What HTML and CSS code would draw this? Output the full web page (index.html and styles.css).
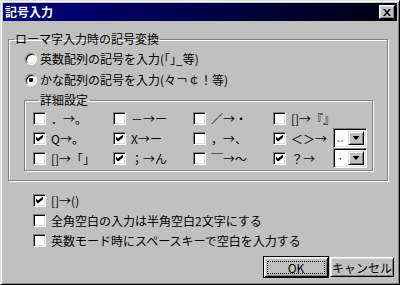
FILE: index.html
```html
<!DOCTYPE html>
<html lang="ja">

<head>
    <meta charset="UTF-8">
    <title>記号入力</title>
    <link rel="stylesheet" href="styles.css">
</head>

<body>

    <div class="window">
        <div class="titlebar">
            <span class="title">記号入力</span>
            <button class="close" type="button">
                <svg width="8" height="7" viewBox="0 0 8 7">
                    <path d="M0 0H2L4 2.2L6 0H8L5 3.5L8 7H6L4 4.8L2 7H0L3 3.5Z" fill="#000" />
                </svg>
            </button>
        </div>

        <div class="content">
            <fieldset class="group outer">
                <legend>ローマ字入力時の記号変換</legend>
                <label class="radio-row"><span class="radio"></span>英数配列の記号を入力(｢｣_等)</label>
                <label class="radio-row"><span class="radio on"></span>かな配列の記号を入力(々￢￠！等)</label>

                <fieldset class="group detail">
                    <legend>詳細設定</legend>
                    <div class="grid">
                        <div class="cell"><span class="check"></span>．→。</div>
                        <div class="cell"><span class="check"></span>－→ー</div>
                        <div class="cell"><span class="check"></span>／→・</div>
                        <div class="cell"><span class="check"></span>[]→『』</div>

                        <div class="cell"><span class="check on"></span>Q→。</div>
                        <div class="cell"><span class="check on"></span>X→ー</div>
                        <div class="cell"><span class="check"></span>，→、</div>
                        <div class="cell">
                            <span class="check on"></span>＜＞→
                            <span class="combo"><span class="combo-value">、。</span><span class="combo-btn"></span></span>
                        </div>

                        <div class="cell"><span class="check"></span>[]→「」</div>
                        <div class="cell"><span class="check on"></span>；→ん</div>
                        <div class="cell"><span class="check"></span>￣→～</div>
                        <div class="cell">
                            <span class="check on"></span>？→
                            <span class="combo"><span class="combo-value">・</span><span class="combo-btn"></span></span>
                        </div>
                    </div>
                </fieldset>
            </fieldset>

            <div class="options">
                <label class="opt"><span class="check on"></span>[]→()</label>
                <label class="opt"><span class="check"></span>全角空白の入力は半角空白2文字にする</label>
                <label class="opt"><span class="check"></span>英数モード時にスペースキーで空白を入力する</label>
            </div>

            <div class="buttons">
                <button class="btn default" type="button"><span class="focus">OK</span></button>
                <button class="btn" type="button">キャンセル</button>
            </div>
        </div>
    </div>

</body>

</html>
```

FILE: styles.css
```css
* {
    box-sizing: border-box;
}

body {
    margin: 0;
    background-color: #c0c0c0;
    font-family: "Noto Sans CJK JP", "Liberation Sans", sans-serif;
    font-size: 12px;
    color: #000;
}

.window {
    width: 400px;
    height: 285px;
    padding: 2px;
    border: 1px solid;
    border-color: #dfdfdf #000 #000 #dfdfdf;
    box-shadow: inset 1px 1px #fff, inset -1px -1px #808080;
}

.titlebar {
    height: 18px;
    display: flex;
    align-items: center;
    justify-content: space-between;
    padding: 0 2px;
    background: linear-gradient(to right, #000080, #000010);
    color: #fff;
}

.title {
    font-weight: bold;
    line-height: 18px;
}

.close {
    width: 16px;
    height: 14px;
    padding: 0;
    display: flex;
    align-items: center;
    justify-content: center;
    background-color: #c0c0c0;
    border: 1px solid;
    border-color: #fff #000 #000 #fff;
    box-shadow: inset 1px 1px #dfdfdf, inset -1px -1px #808080;
}

/* etched group frame */
.group {
    margin: 0;
    border: 1px solid #808080;
    box-shadow: inset 1px 1px #fff, 1px 1px #fff;
    min-width: 0;
}

.group legend {
    margin-left: 5px;
    padding: 0 1px;
    line-height: 14px;
    height: 14px;
}

.outer {
    width: 380px;
    margin: 11px 0 0 5px;
    padding: 2px 0 9px 0;
}

.radio-row {
    display: flex;
    align-items: center;
    gap: 3px;
    height: 21px;
    padding-left: 16px;
}

.radio {
    width: 12px;
    height: 12px;
    border-radius: 50%;
    background-color: #fff;
    border: 1px solid;
    border-color: #808080 #fff #fff #808080;
    box-shadow: inset 1px 1px #000, inset -1px -1px #dfdfdf;
    display: flex;
    align-items: center;
    justify-content: center;
}

.radio.on::after {
    content: "";
    width: 4px;
    height: 4px;
    border-radius: 1px;
    background-color: #000;
}

.detail {
    width: 349px;
    margin: 3px 0 0 15px;
    padding: 1px 5px 2px 8px;
}

.detail legend {
    padding: 0 2px;
}

.grid {
    display: grid;
    grid-template-columns: 80px 80px 80px auto;
    grid-auto-rows: 20px;
}

.cell {
    display: flex;
    align-items: center;
    gap: 5px;
    white-space: nowrap;
}

.check {
    flex: none;
    width: 13px;
    height: 13px;
    background-color: #fff;
    border: 1px solid;
    border-color: #808080 #fff #fff #808080;
    box-shadow: inset 1px 1px #000, inset -1px -1px #dfdfdf;
    display: flex;
    align-items: center;
    justify-content: center;
}

.check.on::after {
    content: "";
    width: 7px;
    height: 7px;
    background-color: #000;
    clip-path: polygon(0 28%, 28% 57%, 100% 0, 100% 43%, 28% 100%, 0 71%);
}

.combo {
    width: 34px;
    height: 20px;
    margin-left: auto;
    display: flex;
    padding: 2px;
    background-color: #fff;
    border: 1px solid;
    border-color: #808080 #fff #fff #808080;
    box-shadow: inset 1px 1px #000, inset -1px -1px #dfdfdf;
}

.combo-value {
    flex: 1;
    font-size: 7px;
    line-height: 14px;
    padding-left: 1px;
}

.combo-btn {
    width: 16px;
    height: 14px;
    flex: none;
    display: flex;
    align-items: center;
    justify-content: center;
    background-color: #c0c0c0;
    border: 1px solid;
    border-color: #dfdfdf #000 #000 #dfdfdf;
    box-shadow: inset 1px 1px #fff, inset -1px -1px #808080;
}

.combo-btn::after {
    content: "";
    width: 7px;
    height: 4px;
    background-color: #000;
    clip-path: polygon(0 0, 100% 0, 50% 100%);
}

.options {
    margin-top: 9px;
    padding-left: 30px;
}

.opt {
    display: flex;
    align-items: center;
    gap: 5px;
    height: 20px;
}

.buttons {
    display: flex;
    justify-content: flex-end;
    align-items: center;
    gap: 1px;
    margin-top: 6px;
    padding-right: 3px;
}

.btn {
    width: 64px;
    height: 20px;
    padding: 0;
    font-family: inherit;
    font-size: 12px;
    color: #000;
    background-color: #c0c0c0;
    border: 1px solid;
    border-color: #fff #000 #000 #fff;
    box-shadow: inset 1px 1px #dfdfdf, inset -1px -1px #808080;
    display: flex;
    align-items: center;
    justify-content: center;
}

.btn.default {
    width: 66px;
    height: 22px;
    border-color: #000;
    box-shadow: inset 1px 1px #fff, inset -1px -1px #000, inset 2px 2px #dfdfdf, inset -2px -2px #808080;
}

.focus {
    width: 58px;
    height: 13px;
    border: 1px dotted #000;
    display: flex;
    align-items: center;
    justify-content: center;
    line-height: 11px;
}
```
